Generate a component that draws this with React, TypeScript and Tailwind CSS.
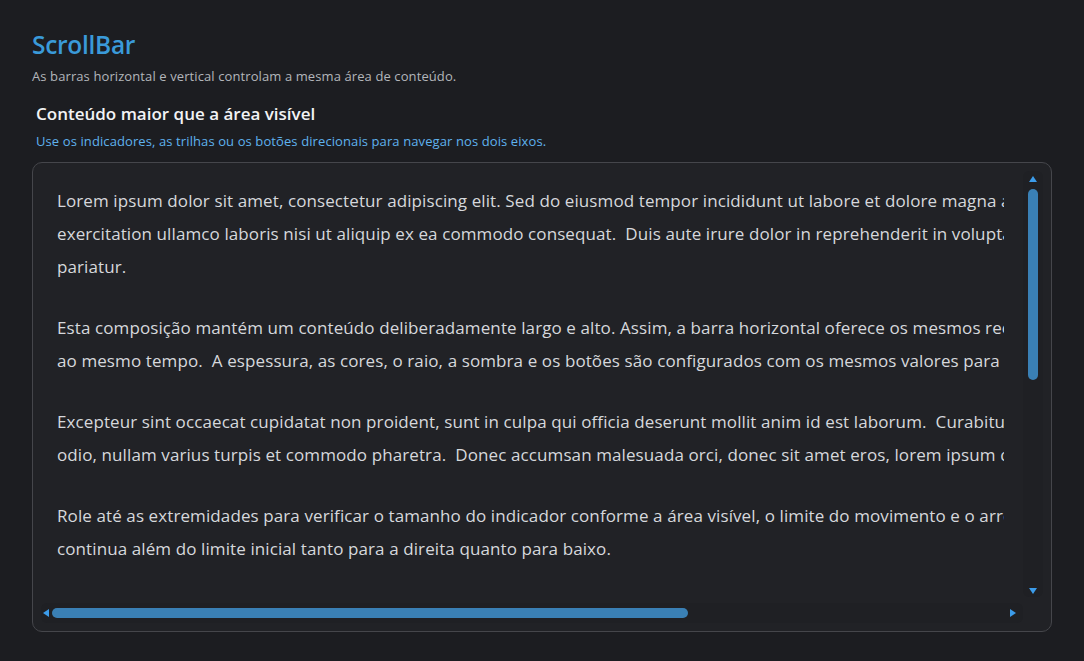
import React from 'react';

const paragraphs: string[][] = [
    [
        'Lorem ipsum dolor sit amet, consectetur adipiscing elit. Sed do eiusmod tempor incididunt ut labore et dolore magna aliqua. Ut enim ad minim veniam, quis nostrud',
        'exercitation ullamco laboris nisi ut aliquip ex ea commodo consequat.  Duis aute irure dolor in reprehenderit in voluptate velit esse cillum dolore eu fugiat nulla',
        'pariatur.',
    ],
    [
        'Esta composição mantém um conteúdo deliberadamente largo e alto. Assim, a barra horizontal oferece os mesmos recursos da vertical, e as duas podem ser usadas',
        'ao mesmo tempo.  A espessura, as cores, o raio, a sombra e os botões são configurados com os mesmos valores para dar uma aparência consistente.',
    ],
    [
        'Excepteur sint occaecat cupidatat non proident, sunt in culpa qui officia deserunt mollit anim id est laborum.  Curabitur pretium tincidunt lacus, nulla gravida orci a',
        'odio, nullam varius turpis et commodo pharetra.  Donec accumsan malesuada orci, donec sit amet eros, lorem ipsum dolor sit amet, consectetur adipiscing.',
    ],
    [
        'Role até as extremidades para verificar o tamanho do indicador conforme a área visível, o limite do movimento e o arredondamento das bordas. O texto',
        'continua além do limite inicial tanto para a direita quanto para baixo.',
    ],
];

function Arrow({ dir }: { dir: 'up' | 'down' | 'left' | 'right' }) {
    const points = {
        up: '0,6 4,0 8,6',
        down: '0,0 8,0 4,6',
        left: '6,0 6,8 0,4',
        right: '0,0 0,8 6,4',
    }[dir];
    const vertical = dir === 'up' || dir === 'down';
    return (
        <svg width={vertical ? 8 : 6} height={vertical ? 6 : 8} viewBox={vertical ? '0 0 8 6' : '0 0 6 8'} className="shrink-0">
            <polygon points={points} fill="#3c9cea" />
        </svg>
    );
}

export default function App() {
    return (
        <div
            className="min-h-screen w-full bg-[#1c1d21] px-8 pt-[30px] pb-[30px]"
            style={{ fontFamily: '"Open Sans", "Noto Sans", sans-serif' }}
        >
            {/* Header */}
            <h1 className="text-[24.5px] leading-[30px] font-semibold text-[#3a9ad9] tracking-[-0.3px]">ScrollBar</h1>
            <p className="mt-[8px] text-[13px] leading-[16px] text-[#b3b6bb] tracking-[0.1px]">
                As barras horizontal e vertical controlam a mesma área de conteúdo.
            </p>

            <div className="px-1 mt-[19px]">
                <h2 className="text-[17px] leading-[22px] font-semibold text-[#f2f3f5]">Conteúdo maior que a área visível</h2>
                <p className="mt-[8px] text-[13px] leading-[16px] text-[#5fb2ee] tracking-[0.1px]">
                    Use os indicadores, as trilhas ou os botões direcionais para navegar nos dois eixos.
                </p>
            </div>

            {/* Scroll box */}
            <div className="mt-[13px] h-[470px] rounded-[10px] border border-[#45464b] bg-[#212226] p-2 flex flex-col">
                <div className="flex flex-1 min-h-0">
                    <div className="flex-1 min-w-0 mr-[19px] overflow-hidden pl-4 pt-[13px]">
                        {paragraphs.map((lines, i) => (
                            <div key={i} className="mb-[28px] text-[17px] leading-[33px] text-[#d6d8dc] tracking-[0.1px] whitespace-pre">
                                {lines.map((line, j) => (
                                    <div key={j}>{line}</div>
                                ))}
                            </div>
                        ))}
                    </div>
                    {/* Vertical bar */}
                    <div className="w-5 flex flex-col items-center rounded-md bg-[#1f2024] pt-[5px] pb-[3px]">
                        <Arrow dir="up" />
                        <div className="mt-[7px] h-[191px] w-[10px] rounded-full bg-[#3a80b5]" />
                        <div className="flex-1" />
                        <Arrow dir="down" />
                    </div>
                </div>
                {/* Horizontal bar */}
                <div className="mt-[6px] h-5 flex">
                    <div className="flex-1 flex items-center rounded-md bg-[#1f2024] pl-[2px] pr-[7px]">
                        <Arrow dir="left" />
                        <div className="ml-[3px] h-[10px] w-[636px] rounded-full bg-[#3a80b5]" />
                        <div className="flex-1" />
                        <Arrow dir="right" />
                    </div>
                    <div className="w-5" />
                </div>
            </div>
        </div>
    );
}
